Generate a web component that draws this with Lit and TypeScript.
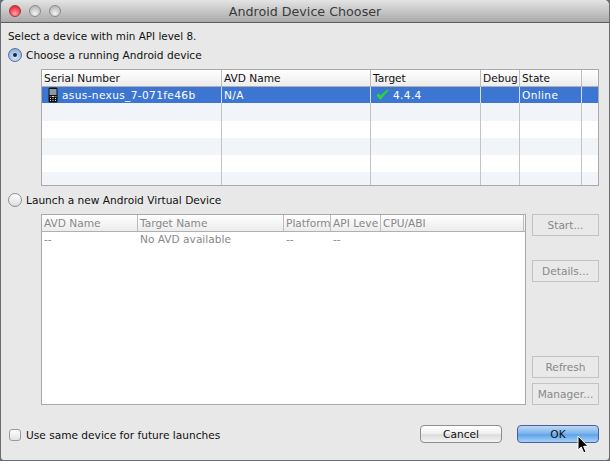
import { css, html, LitElement, nothing, svg } from 'lit';
import { customElement } from 'lit/decorators.js';

type Column = { label: string; width: number };

const DEVICE_COLUMNS: Column[] = [
  { label: 'Serial Number', width: 180 },
  { label: 'AVD Name', width: 149 },
  { label: 'Target', width: 110 },
  { label: 'Debug', width: 39 },
  { label: 'State', width: 62 },
  { label: '', width: 16 },
];

const AVD_COLUMNS: Column[] = [
  { label: 'AVD Name', width: 96 },
  { label: 'Target Name', width: 146 },
  { label: 'Platform', width: 47 },
  { label: 'API Leve', width: 50 },
  { label: 'CPU/ABI', width: 143 },
  { label: '', width: 1 },
];

const phoneIcon = svg`<svg class="phone" width="10" height="16" viewBox="0 0 10 16">
  <rect x="0.5" y="0.5" width="9" height="15" rx="1.5" fill="#111"/>
  <rect x="1.5" y="2" width="7" height="6" fill="#8d9aa6"/>
  <rect x="1.5" y="9" width="2" height="1" fill="#e33"/>
  <rect x="4" y="9" width="2" height="1" fill="#ddd"/>
  <rect x="6.5" y="9" width="2" height="1" fill="#3c4"/>
  <path d="M2 11h1v1H2zM4.500 11h1v1h-1zM7 11h1v1H7zM2 13h1v1H2zM4.500 13h1v1h-1zM7 13h1v1H7z" fill="#ddd"/>
</svg>`;

const checkIcon = svg`<svg class="check" width="13" height="11" viewBox="0 0 13 11">
  <path d="M1 6.200 L3 5 L4.800 7.200 C6.500 4.700 9 2.300 12 1 L12.300 1.600 C9.800 3.800 7.300 6.800 5 10 L3.800 10 Z" fill="#27d63e" stroke="#27d63e" stroke-width="1" stroke-linejoin="round"/>
</svg>`;

const cursorIcon = svg`<svg class="cursor" width="13" height="19" viewBox="0 0 13 19">
  <path d="M1 1 V15 L4.300 12 L6.700 17.800 L9 16.800 L6.600 11.300 H11 Z" fill="#000" stroke="#fff" stroke-width="1"/>
</svg>`;

@customElement('app-root')
export class AppRoot extends LitElement {
  static styles = css`
    :host {
      display: block;
      width: 610px;
      height: 461px;
      background: #6b6d75;
      font-family: 'DejaVu Sans', sans-serif;
      font-size: 10.6px;
      color: #111;
      overflow: hidden;
    }

    .window {
      position: relative;
      box-sizing: border-box;
      width: 608px;
      height: 460px;
      margin-left: 1px;
      background: #e8e8e8;
      border-radius: 5px 5px 3px 3px;
      overflow: hidden;
      display: flex;
      flex-direction: column;
    }

    .titlebar {
      flex: none;
      height: 22px;
      background: linear-gradient(#e4e4e4, #a9a9a9);
      border-bottom: 1px solid #5c5c5c;
      display: flex;
      align-items: center;
      position: relative;
    }

    .lights {
      display: flex;
      gap: 8px;
      margin-left: 8px;
    }

    .light {
      width: 12px;
      height: 12px;
      border-radius: 50%;
      box-sizing: border-box;
      border: 1px solid #8a8a8a;
      background: radial-gradient(circle at 50% 75%, #f4f4f4, #bdbdbd 70%);
    }

    .light.close {
      border-color: #a8343a;
      background: radial-gradient(circle at 50% 75%, #ffa5a8, #ea3440 70%);
    }

    .title {
      position: absolute;
      left: 0;
      right: 0;
      text-align: center;
      font-size: 12.7px;
      color: #3a3a3a;
    }

    .body {
      flex: 1;
      padding: 5px 10px 0 7px;
      display: flex;
      flex-direction: column;
    }

    .intro {
      height: 16px;
      line-height: 16px;
      font-size: 10.4px;
    }

    .choice {
      display: flex;
      align-items: center;
      gap: 4px;
      height: 16px;
    }

    .choice.first {
      margin-top: 3px;
    }

    .choice.second {
      margin-top: 6px;
    }

    .radio {
      width: 14px;
      height: 14px;
      box-sizing: border-box;
      border-radius: 50%;
      border: 1px solid #8f8f8f;
      background: linear-gradient(#fff, #dcdcdc);
      display: grid;
      place-items: center;
    }

    .radio.on {
      border-color: #5a6f96;
      background: radial-gradient(circle at 50% 70%, #d5e8fb, #8ab0e0 80%);
    }

    .radio.on::after {
      content: '';
      width: 4px;
      height: 4px;
      border-radius: 50%;
      background: #1b2a44;
    }

    .table {
      box-sizing: border-box;
      border: 1px solid #a9a9a9;
      background: #fff;
      overflow: hidden;
    }

    .table.devices {
      margin: 6px 0 0 33px;
      width: 558px;
      height: 117px;
    }

    .table.avds {
      flex: 1;
      width: 485px;
      color: #888;
    }

    .row {
      display: flex;
      height: 17px;
    }

    .cell {
      flex: none;
      box-sizing: border-box;
      height: 100%;
      padding-left: 2px;
      display: flex;
      align-items: center;
      white-space: nowrap;
      overflow: hidden;
      border-right: 1px solid #c4c4c4;
    }

    .cell:last-child {
      border-right: none;
    }

    .head {
      height: 16px;
      background: linear-gradient(#ffffff, #ececec);
      border-bottom: 1px solid #b0b0b0;
    }

    .head .cell {
      padding-bottom: 1px;
      border-right-color: #bdbdbd;
    }

    .row.tint {
      background: #f1f5fa;
    }

    .row.selected {
      height: 16px;
      background: #3d76d2;
      color: #fff;
      letter-spacing: 0.35px;
    }

    .row.selected .cell {
      padding-bottom: 1px;
      border-right-color: #d6e0f2;
    }

    .row.selected + .row {
      height: 18px;
    }

    .row.values .cell {
      padding-bottom: 4px;
      border-right: none;
    }

    .phone {
      margin: 0 4px 0 4px;
      flex: none;
    }

    .check {
      margin: 0 4px 0 3px;
      flex: none;
    }

    .lower {
      margin: 6px 0 0 33px;
      display: grid;
      grid-template-columns: 485px 67px;
      column-gap: 6px;
      height: 191px;
    }

    .side {
      display: flex;
      flex-direction: column;
    }

    .side-button {
      box-sizing: border-box;
      height: 22px;
      border: 1px solid #c2c2c2;
      background: #e9e9e9;
      color: #888;
      display: grid;
      place-items: center;
      white-space: nowrap;
    }

    .side-button.gap-small {
      margin-top: 24px;
    }

    .side-button.gap-large {
      margin-top: auto;
      margin-bottom: 5px;
    }

    .footer {
      margin-top: 20px;
      height: 18px;
      display: flex;
      align-items: center;
    }

    .same-device {
      display: flex;
      align-items: center;
      gap: 5px;
      margin-left: 1px;
      padding-top: 2px;
    }

    .checkbox {
      width: 12px;
      height: 12px;
      box-sizing: border-box;
      border: 1px solid #9a9a9a;
      border-radius: 3px;
      background: linear-gradient(#fdfdfd, #e2e2e2);
    }

    .actions {
      margin-left: auto;
      display: flex;
      gap: 15px;
    }

    .action {
      box-sizing: border-box;
      width: 82px;
      height: 18px;
      border-radius: 4px;
      border: 1px solid #8e8e8e;
      background: linear-gradient(#ffffff, #f2f2f2 45%, #dcdcdc 55%, #f4f4f4);
      display: grid;
      place-items: center;
      color: #111;
    }

    .action.primary {
      border-color: #4c5f95;
      background: linear-gradient(#bcd8f6, #80b6ee 45%, #5fa3ea 55%, #a6d2f8);
    }

    .cursor {
      position: absolute;
      left: 576px;
      top: 435px;
    }
  `;

  private renderCell(column: Column, content: unknown) {
    return html`<div class="cell" style="width:${column.width}px">${content}</div>`;
  }

  private renderHead(columns: Column[]) {
    return html`<div class="row head">
      ${columns.map((column) => this.renderCell(column, column.label))}
    </div>`;
  }

  private renderDevices() {
    const [serial, avd, target, debug, state, filler] = DEVICE_COLUMNS;
    return html`<div class="table devices">
      ${this.renderHead(DEVICE_COLUMNS)}
      <div class="row selected">
        ${this.renderCell(serial, html`${phoneIcon}asus-nexus_7-071fe46b`)}
        ${this.renderCell(avd, 'N/A')}
        ${this.renderCell(target, html`${checkIcon}4.4.4`)}
        ${this.renderCell(debug, nothing)}
        ${this.renderCell(state, 'Online')}
        ${this.renderCell(filler, nothing)}
      </div>
      ${[true, false, true, false, true].map(
        (tint) => html`<div class="row ${tint ? 'tint' : ''}">
          ${DEVICE_COLUMNS.map((column) => this.renderCell(column, nothing))}
        </div>`
      )}
    </div>`;
  }

  private renderAvds() {
    const values = ['--', 'No AVD available', '--', '--', '', ''];
    return html`<div class="table avds">
      ${this.renderHead(AVD_COLUMNS)}
      <div class="row values">
        ${AVD_COLUMNS.map((column, index) => this.renderCell(column, values[index]))}
      </div>
    </div>`;
  }

  render() {
    return html`
      <div class="window">
        <div class="titlebar">
          <div class="lights">
            <div class="light close"></div>
            <div class="light"></div>
            <div class="light"></div>
          </div>
          <div class="title">Android Device Chooser</div>
        </div>
        <div class="body">
          <div class="intro">Select a device with min API level 8.</div>
          <div class="choice first">
            <span class="radio on"></span>Choose a running Android device
          </div>
          ${this.renderDevices()}
          <div class="choice second">
            <span class="radio"></span>Launch a new Android Virtual Device
          </div>
          <div class="lower">
            ${this.renderAvds()}
            <div class="side">
              <div class="side-button">Start...</div>
              <div class="side-button gap-small">Details...</div>
              <div class="side-button gap-large">Refresh</div>
              <div class="side-button">Manager...</div>
            </div>
          </div>
          <div class="footer">
            <div class="same-device">
              <span class="checkbox"></span>Use same device for future launches
            </div>
            <div class="actions">
              <div class="action">Cancel</div>
              <div class="action primary">OK</div>
            </div>
          </div>
        </div>
        ${cursorIcon}
      </div>
    `;
  }
}
